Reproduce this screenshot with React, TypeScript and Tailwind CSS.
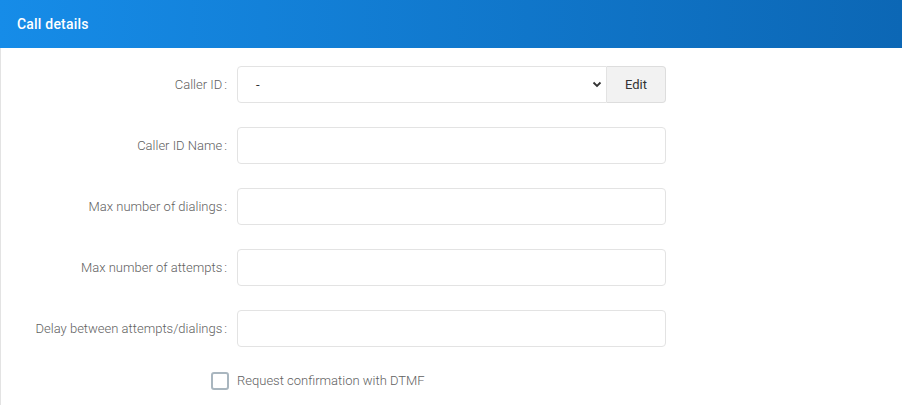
import React from "react";

const rows = [
  "Caller ID Name",
  "Max number of dialings",
  "Max number of attempts",
  "Delay between attempts/dialings",
];

export default function App() {
  return (
    <div
      className="w-[902px] h-[405px] bg-white overflow-hidden"
      style={{ fontFamily: "Roboto, 'Liberation Sans', sans-serif" }}
    >
      <div className="h-[48px] flex items-center px-[17px] bg-gradient-to-r from-[#168ce8] to-[#0c67b5]">
        <span className="text-white text-[14px] font-medium tracking-[0.2px]">Call details</span>
      </div>

      <div className="border-l border-[#e3e3e3] h-[357px] pt-[18px]">
        {/* Caller ID */}
        <div className="flex items-center h-[37px]">
          <label className="w-[229px] pr-[3px] text-right text-[13px] font-light text-[#5f5f5f]">
            Caller ID<span className="ml-[2px]">:</span>
          </label>
          <div className="ml-[7px] flex h-[37px]">
            <div className="w-[370px] h-full border border-[#e3e3e3] rounded-l-[4px] flex items-center justify-between pl-[18px] pr-[4px]">
              <span className="text-[13px] text-[#333]">-</span>
              <svg width="10" height="7" viewBox="0 0 10 7">
                <path d="M1.5 1.5 L5 5 L8.5 1.5" stroke="#333" strokeWidth="1.8" fill="none" />
              </svg>
            </div>
            <button className="w-[59px] h-full bg-[#f2f2f2] border border-l-0 border-[#dddddd] rounded-r-[4px] text-[13px] text-[#333]">
              Edit
            </button>
          </div>
        </div>

        {rows.map((r) => (
          <div key={r} className="flex items-center h-[37px] mt-[24px]">
            <label className="w-[229px] pr-[3px] text-right text-[13px] font-light text-[#5f5f5f]">
              {r}<span className="ml-[2px]">:</span>
            </label>
            <input className="ml-[7px] w-[429px] h-[37px] border border-[#e3e3e3] rounded-[4px] outline-none" />
          </div>
        ))}

        <div className="flex items-center mt-[24px] h-[19px]">
          <div className="ml-[210px] w-[18px] h-[18px] border-2 border-[#a9b6bf] rounded-[3px]" />
          <span className="ml-[8px] text-[13px] font-light text-[#5f5f5f]">Request confirmation with DTMF</span>
        </div>
      </div>
    </div>
  );
}
